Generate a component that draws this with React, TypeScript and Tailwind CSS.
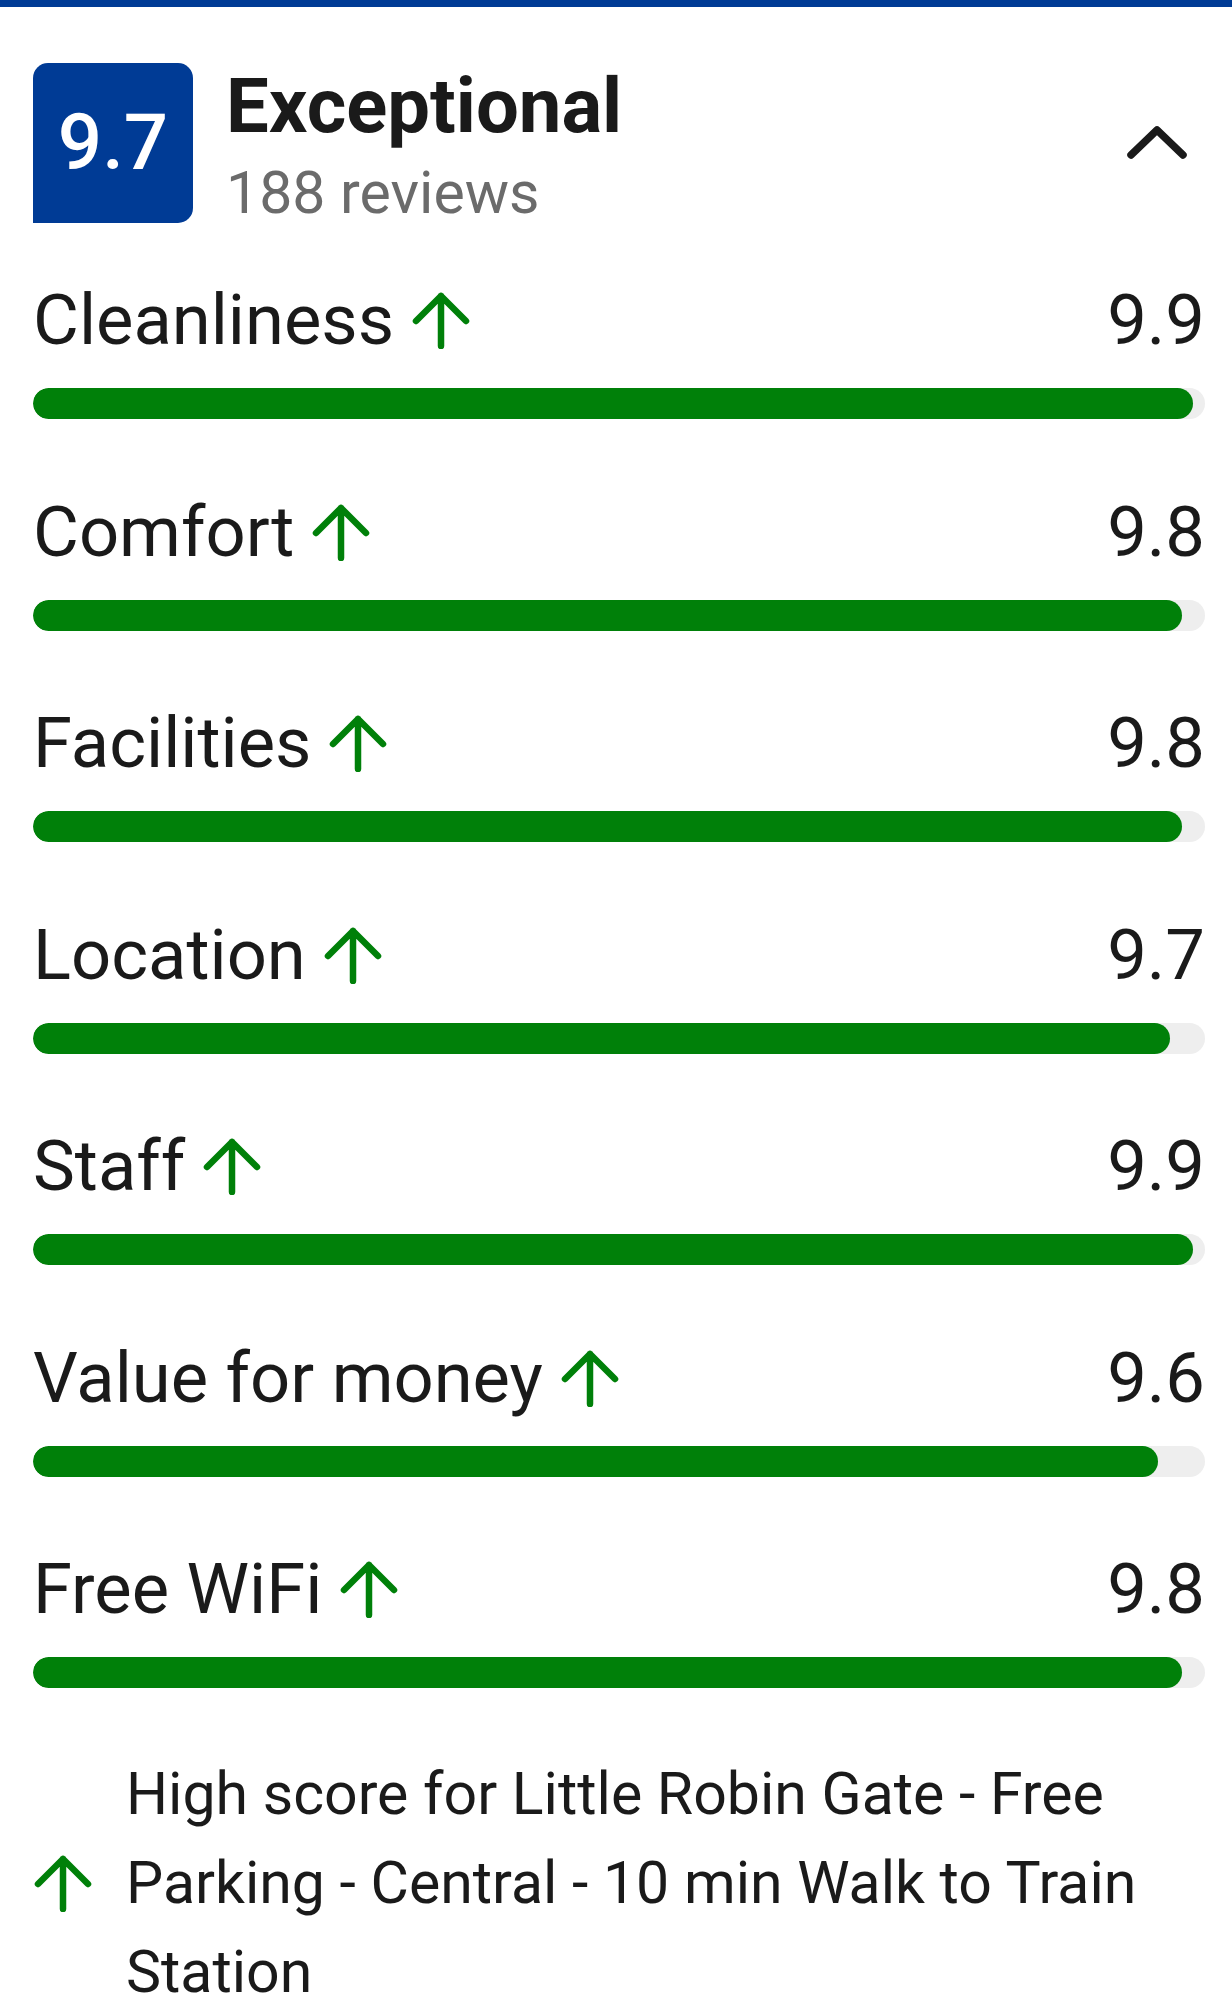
import React from "react";

const rows = [
  { label: "Cleanliness", score: 9.9 },
  { label: "Comfort", score: 9.8 },
  { label: "Facilities", score: 9.8 },
  { label: "Location", score: 9.7 },
  { label: "Staff", score: 9.9 },
  { label: "Value for money", score: 9.6 },
  { label: "Free WiFi", score: 9.8 },
];

function UpArrow() {
  return (
    <svg width="58" height="58" viewBox="0 0 58 58" fill="none" className="shrink-0">
      <path
        d="M29 55 V5 M4 30 L29 5 L54 30"
        stroke="#008009"
        strokeWidth="6.5"
        strokeLinecap="round"
        strokeLinejoin="round"
      />
    </svg>
  );
}

export default function App() {
  return (
    <div className="w-[1232px] min-h-[2000px] bg-white text-[#1a1a1a] font-['Roboto','Liberation_Sans',sans-serif]">
      <div className="h-[7px] bg-[#003b95]" />
      <div className="pl-[33px] pr-[27px] pt-[49px]">
        {/* Header */}
        <div className="flex items-center">
          <div className="w-[160px] h-[160px] bg-[#003b95] rounded-[15px] rounded-bl-none flex items-center justify-center shrink-0">
            <span className="text-white text-[78px] font-medium leading-none">9.7</span>
          </div>
          <div className="ml-[33px] flex flex-col">
            <span className="text-[76px] font-bold leading-[100px] text-[#1a1a1a]">Exceptional</span>
            <span className="text-[59px] leading-[74px] text-[#6b6b6b]">188 reviews</span>
          </div>
          <div className="ml-auto mr-[18px]">
            <svg width="60" height="34" viewBox="0 0 60 34" fill="none">
              <path
                d="M4 29 L30 4 L56 29"
                stroke="#1a1a1a"
                strokeWidth="7.5"
                strokeLinecap="round"
                strokeLinejoin="round"
              />
            </svg>
          </div>
        </div>

        {/* Rows */}
        <div className="mt-[50px] flex flex-col gap-[72.5px]">
          {rows.map((r) => (
            <div key={r.label} className="flex flex-col">
              <div className="h-[80px] flex items-center justify-between">
                <div className="flex items-center gap-[18px]">
                  <span className="text-[70.5px] leading-[80px]">{r.label}</span>
                  <UpArrow />
                </div>
                <span className="text-[70.5px] leading-[80px]">{r.score.toFixed(1)}</span>
              </div>
              <div className="mt-[28px] h-[31px] rounded-full bg-[#eeeeee] overflow-hidden">
                <div
                  className="h-full rounded-full bg-[#008009]"
                  style={{ width: `${r.score * 10}%` }}
                />
              </div>
            </div>
          ))}
        </div>

        {/* Bottom */}
        <div className="mt-[61px] flex items-center gap-[33px]">
          <div className="w-[60px] flex justify-center shrink-0">
            <UpArrow />
          </div>
          <p className="text-[59px] leading-[89px] text-[#1a1a1a]">
            High score for Little Robin Gate - Free Parking - Central - 10 min Walk to Train Station
          </p>
        </div>
      </div>
    </div>
  );
}
